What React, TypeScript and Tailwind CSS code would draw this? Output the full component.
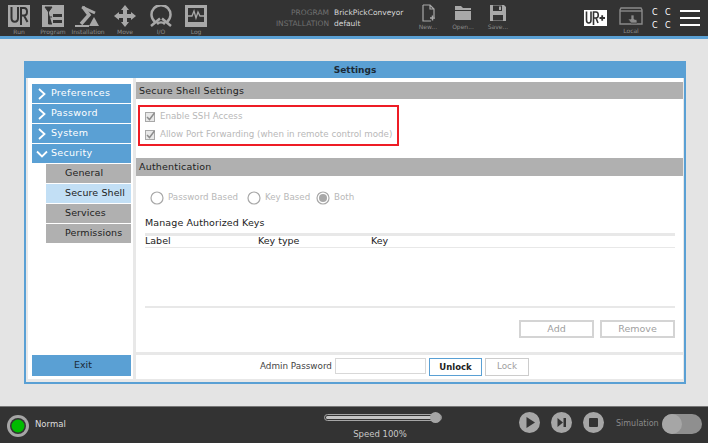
import React from "react";

const font = { fontFamily: '"DejaVu Sans", sans-serif' };

function NavIcon({ label, w, children, className }: { label: string; w: string; children: React.ReactNode; className?: string }) {
    return <div className={`flex flex-col items-center shrink-0 ${w} ${className || ""}`}>
        <div className="h-[23px] flex items-center justify-center">{children}</div>
        <span className="text-[6px] leading-[7px] mt-[1px] text-[#8a8a8a] whitespace-nowrap">{label}</span>
    </div>;
}

function UrMark({ color, bg }: { color: string; bg: string }) {
    return <>
        <path d="M0 0H22V22H0Z" fill={color} />
        <path d="M3.5 2V13C3.5 18 10 18 10 13V2M13 20V3H16C20 3 20 10.5 16 10.5H13M16 10.5L19.5 17" fill="none" stroke={bg} strokeWidth="2" />
    </>;
}

function SideItem({ label, open }: { label: string; open?: boolean }) {
    return <div className="h-[19px] mb-[1px] bg-[#5aa0d4] flex items-center text-white text-[9.5px]">
        <svg width="12" height="12" viewBox="0 0 12 12" className="ml-[4px] mr-[3px] shrink-0">
            <path d={open ? "M1 3.5L6 8.5L11 3.5" : "M3 1L8.5 6L3 11"} fill="none" stroke="white" strokeWidth="1.8" />
        </svg>
        <span className="tracking-[0.3px]">{label}</span>
    </div>;
}

function SubItem({ label, active }: { label: string; active?: boolean }) {
    return <div className={`h-[19px] mb-[1px] ml-[14px] pl-[19px] flex items-center text-[9.5px] text-[#222] ${active ? "bg-[#c2dff5]" : "bg-[#b0b0b0]"}`}>
        <span className="tracking-[0.1px]">{label}</span>
    </div>;
}

function Check({ label }: { label: string }) {
    return <div className="h-[18px] flex items-center text-[8.7px] text-[#b8b8b8] whitespace-nowrap">
        <svg width="10" height="10" viewBox="0 0 10 10" className="mr-[5px] shrink-0">
            <rect x="0.5" y="0.5" width="9" height="9" fill="#e8e8e8" stroke="#a8a8a8" />
            <path d="M2 5L4.5 7.5L9.5 1" fill="none" stroke="#8c8c8c" strokeWidth="1.5" />
        </svg>
        {label}
    </div>;
}

function Radio({ label, on, w }: { label: string; on?: boolean; w: string }) {
    return <div className={`flex items-center text-[8.7px] text-[#b8b8b8] whitespace-nowrap ${w}`}>
        <svg width="14" height="14" viewBox="0 0 14 14" className="mr-[4px] shrink-0">
            <circle cx="7" cy="7" r="6" fill="white" stroke="#a8a8a8" strokeWidth="1.2" />
            {on && <circle cx="7" cy="7" r="4" fill="#a8a8a8" />}
        </svg>
        {label}
    </div>;
}

function Round({ children }: { children: React.ReactNode }) {
    return <svg width="21" height="21" viewBox="0 0 21 21" className="shrink-0">
        <circle cx="10.5" cy="10.5" r="10.5" fill="#a6a6a6" />
        {children}
    </svg>;
}

export default function App() {
    return <div className="w-[708px] h-[443px] flex flex-col bg-[#e4e4e4] overflow-hidden" style={font}>
        <div className="h-[36px] bg-[#333333] flex shrink-0 text-[#a8a8a8]">
            <div className="flex pt-[4px] pl-[8px]">
                <NavIcon label="Run" w="w-[22px]">
                    <svg width="22" height="22" viewBox="0 0 22 22"><UrMark color="#a8a8a8" bg="#333333" /></svg>
                </NavIcon>
                <NavIcon label="Program" w="w-[24px]" className="ml-[11px]">
                    <svg width="22" height="22" viewBox="0 0 22 22">
                        <path d="M0 0H22V22H0Z" fill="#a8a8a8" />
                        <path d="M3 2H10L6.5 7ZM6.5 7V19H10M6.5 12H10" fill="#333333" stroke="#333333" strokeWidth="1" />
                        <path d="M11 9H20V12H11ZM11 15H20V18H11Z" fill="#333333" />
                    </svg>
                </NavIcon>
                <NavIcon label="Installation" w="w-[28px]" className="ml-[9px]">
                    <svg width="26" height="22" viewBox="0 0 26 22">
                        <path d="M7 2L20 8" fill="none" stroke="#a8a8a8" strokeWidth="3" />
                        <path d="M8 2L14 10L6 19" fill="none" stroke="#a8a8a8" strokeWidth="3.5" />
                        <path d="M14 21L19 12L24 21Z" fill="#a8a8a8" />
                        <path d="M0 21H14" stroke="#a8a8a8" strokeWidth="2" />
                    </svg>
                </NavIcon>
                <NavIcon label="Move" w="w-[22px]" className="ml-[12px]">
                    <svg width="22" height="22" viewBox="0 0 22 22">
                        <path d="M11 0L15 5H13V9H17V7L22 11L17 15V13H13V17H15L11 22L7 17H9V13H5V15L0 11L5 7V9H9V5H7Z" fill="#a8a8a8" />
                    </svg>
                </NavIcon>
                <NavIcon label="I/O" w="w-[24px]" className="ml-[13px]">
                    <svg width="24" height="22" viewBox="0 0 24 22" fill="none" stroke="#a8a8a8" strokeWidth="2.5">
                        <path d="M6 17A9.5 9.5 0 1 1 18 17" />
                        <path d="M2 21L11 13.5M22 21L13 13.5M8 19A6 6 0 0 1 16 19" />
                    </svg>
                </NavIcon>
                <NavIcon label="Log" w="w-[22px]" className="ml-[12px]">
                    <svg width="22" height="22" viewBox="0 0 22 22">
                        <path d="M0 0H22V22H0Z" fill="#a8a8a8" />
                        <path d="M3 3H19V17H3Z" fill="#333333" />
                        <path d="M3 11H7L9 6L11 13L13 7L15 11H19" fill="none" stroke="#a8a8a8" strokeWidth="1.3" />
                    </svg>
                </NavIcon>
            </div>
            <div className="flex flex-col ml-[58px] pt-[7px] text-[7.5px] leading-[11px] w-[151px] shrink-0">
                <div className="flex"><span className="w-[64px] text-right text-[#707070]">PROGRAM</span><span className="ml-[5px] text-[#d8d8d8]">BrickPickConveyor</span></div>
                <div className="flex"><span className="w-[64px] text-right text-[#707070] whitespace-nowrap">INSTALLATION</span><span className="ml-[5px] text-[#d8d8d8]">default</span></div>
            </div>
            <div className="flex pt-[4px]">
                <div className="flex flex-col items-center w-[24px]">
                    <svg width="13" height="18" viewBox="0 0 13 18" fill="none" stroke="#a8a8a8" strokeWidth="1.2">
                        <path d="M1 1H8L12 5V13M8 1V5H12M9 17H1V1" />
                        <path d="M8 14H13M10.5 11.5V16.5" strokeWidth="1.5" />
                    </svg>
                    <span className="text-[6px] leading-[7px] mt-[1px] text-[#8a8a8a]">New...</span>
                </div>
                <div className="flex flex-col items-center w-[24px] ml-[11px]">
                    <svg width="18" height="18" viewBox="0 0 18 18"><path d="M1 2H7L9 4H17V6H1ZM1 7H17V16H1Z" fill="#a8a8a8" /></svg>
                    <span className="text-[6px] leading-[7px] mt-[1px] text-[#8a8a8a]">Open...</span>
                </div>
                <div className="flex flex-col items-center w-[24px] ml-[11px]">
                    <svg width="18" height="18" viewBox="0 0 18 18">
                        <path d="M1 1H15L17 3V17H1Z" fill="#a8a8a8" />
                        <path d="M4 1.5H13V7H4ZM4 11H14V16.5H4Z" fill="#333333" />
                        <path d="M10 2.5H12V6H10Z" fill="#a8a8a8" />
                    </svg>
                    <span className="text-[6px] leading-[7px] mt-[1px] text-[#8a8a8a]">Save...</span>
                </div>
            </div>
            <div className="ml-[74px] pt-[10px] shrink-0">
                <svg width="23" height="16" viewBox="0 0 23 16">
                    <path d="M0 0H23V16H0Z" fill="white" />
                    <path d="M2.5 1.5V10C2.5 14 7 14 7 10V1.5M9.5 15V2H12C15 2 15 8 12 8H9.5M12 8L14 13" fill="none" stroke="#333333" strokeWidth="1.6" />
                    <path d="M15.5 8H21M18.2 5.2V10.8" stroke="#333333" strokeWidth="1.8" />
                </svg>
            </div>
            <div className="flex flex-col items-center ml-[12px] pt-[7px] w-[24px]">
                <svg width="24" height="19" viewBox="0 0 24 19" fill="none" stroke="#8a8a8a" strokeWidth="1.4">
                    <path d="M2 1H22L23 3V17H1V3Z" />
                    <path d="M1 4H23" />
                    <path d="M12 8H15V12L18 13V16H12L9 12L12 12Z" fill="#8a8a8a" stroke="#333333" strokeWidth="0.7" />
                </svg>
                <span className="text-[6px] leading-[7px] mt-[1px] text-[#8a8a8a]">Local</span>
            </div>
            <div className="grid grid-cols-[13px_13px] auto-rows-[13px] ml-[9px] pt-[6px] h-[32px] text-[8px] leading-[13px] text-white">
                <span>C</span><span>C</span><span>C</span><span>C</span>
            </div>
            <div className="flex flex-col gap-[5px] ml-[2px] pt-[10px]">
                <div className="w-[20px] h-[2px] bg-white" />
                <div className="w-[20px] h-[2px] bg-white" />
                <div className="w-[20px] h-[2px] bg-white" />
            </div>
        </div>
        <div className="h-[3px] bg-[#5aa0d4] shrink-0" />

        <div className="h-[367px] shrink-0 pt-[22px] pl-[24px]">
            <div className="w-[662px] h-[323px] border-2 border-[#5aa0d4] bg-[#e8e8e8] flex flex-col">
                <div className="h-[15px] bg-[#5aa0d4] shrink-0 flex items-center justify-center text-[9px] font-bold text-[#1c2a36]">Settings</div>
                <div className="flex-1 flex pl-[2px] pr-[1px] pb-[3px] gap-[3px] min-h-0">
                    <div className="w-[105px] bg-white pl-[4px] pr-[2px] pt-[6px] pb-[3px] flex flex-col">
                        <SideItem label="Preferences" />
                        <SideItem label="Password" />
                        <SideItem label="System" />
                        <SideItem label="Security" open />
                        <SubItem label="General" />
                        <SubItem label="Secure Shell" active />
                        <SubItem label="Services" />
                        <SubItem label="Permissions" />
                        <div className="mt-auto h-[21px] pl-[3px] bg-[#5aa0d4] flex items-center justify-center text-[9.5px] text-[#1c2a36]">Exit</div>
                    </div>
                    <div className="flex-1 flex flex-col gap-[3px] min-w-0">
                        <div className="flex-1 bg-white pt-[4px] flex flex-col">
                            <div className="h-[17px] pt-[1px] bg-[#b0b0b0] flex items-center pl-[3px] text-[9.5px] text-[#222] tracking-[0.2px]">Secure Shell Settings</div>
                            <div className="w-[261px] h-[41px] ml-[2px] mt-[6px] border-2 border-[#ee1c25] pl-[5px] pt-[1px]">
                                <Check label="Enable SSH Access" />
                                <Check label="Allow Port Forwarding (when in remote control mode)" />
                            </div>
                            <div className="h-[18px] mt-[12px] bg-[#b0b0b0] flex items-center pl-[3px] text-[9.5px] text-[#222] tracking-[0.2px]">Authentication</div>
                            <div className="flex items-center h-[14px] mt-[15px] pl-[14px]">
                                <Radio label="Password Based" w="w-[97px]" />
                                <Radio label="Key Based" w="w-[69px]" />
                                <Radio label="Both" on w="w-[50px]" />
                            </div>
                            <div className="ml-[9px] mr-[8px] mt-[12px] text-[9.5px] leading-[12px] text-[#222] tracking-[0.1px]">Manage Authorized Keys</div>
                            <div className="ml-[9px] mr-[8px] mt-[4px] h-[75px] border-t-[3px] border-b-2 border-[#e8e8e8] flex flex-col">
                                <div className="h-[10px] flex text-[9.5px] leading-[10px] text-[#222] border-b border-[#e8e8e8] box-content pb-[1px]">
                                    <span className="w-[113px]">Label</span>
                                    <span className="w-[113px]">Key type</span>
                                    <span>Key</span>
                                </div>
                            </div>
                            <div className="flex justify-end gap-[6px] mr-[8px] mt-[12px] text-[9.5px] text-[#a0a0a0]">
                                <div className="w-[75px] h-[18px] border-2 border-[#d4d4d4] flex items-center justify-center">Add</div>
                                <div className="w-[75px] h-[18px] border-2 border-[#d4d4d4] flex items-center justify-center">Remove</div>
                            </div>
                        </div>
                        <div className="h-[24px] bg-white shrink-0 flex items-start pt-[3px] pl-[124px] text-[8.8px]">
                            <span className="text-[#444] mt-[2px] w-[72px] whitespace-nowrap">Admin Password</span>
                            <div className="w-[91px] h-[16px] ml-[3px] border border-[#d8d8d8] bg-white" />
                            <div className="w-[53px] h-[18px] ml-[3px] border border-[#5aa0d4] flex items-center justify-center text-[8.5px] font-bold text-[#222]">Unlock</div>
                            <div className="w-[44px] h-[18px] ml-[3px] border border-[#cccccc] flex items-center justify-center text-[#a0a0a0]">Lock</div>
                        </div>
                    </div>
                </div>
            </div>
        </div>

        <div className="flex-1 bg-[#333333] border-t border-[#777777] flex items-start">
            <svg width="22" height="22" viewBox="0 0 22 22" className="ml-[7px] mt-[8px] shrink-0">
                <circle cx="11" cy="11" r="11" fill="#a6a6a6" />
                <circle cx="11" cy="11" r="8" fill="#333333" />
                <circle cx="11" cy="11" r="6.5" fill="#00bb00" />
            </svg>
            <span className="ml-[6px] mt-[12px] text-[8.5px] leading-[10px] text-[#dddddd] w-[50px] shrink-0">Normal</span>
            <div className="ml-[239px] w-[118px] flex flex-col shrink-0">
                <div className="relative w-[118px] h-[7px] mt-[7px] rounded-full bg-[#333333] border border-[#a6a6a6] flex items-center">
                    <div className="h-[3px] w-full mx-[1px] rounded-full bg-[#c4c4c4]" />
                    <div className="absolute right-0 -top-[3px] w-[11px] h-[11px] rounded-full bg-[#a6a6a6]" />
                </div>
                <span className="mt-[7px] pr-[6px] text-center text-[8.5px] leading-[12px] text-[#c8c8c8]">Speed 100%</span>
            </div>
            <div className="flex gap-[11px] ml-[77px] mt-[5px]">
                <Round><path d="M7.5 5L16 10.5L7.5 16Z" fill="#333333" /></Round>
                <Round><path d="M6.5 6L12 10.5L6.5 15ZM12.5 6H15V15H12.5Z" fill="#333333" /></Round>
                <Round><rect x="6" y="6" width="9" height="9" rx="1" fill="#333333" /></Round>
            </div>
            <span className="ml-[12px] mt-[11px] text-[8px] leading-[12px] text-[#8a8a8a] w-[46px] shrink-0">Simulation</span>
            <div className="w-[40px] h-[20px] mt-[7px] rounded-full bg-[#8f8f8f] relative shrink-0">
                <div className="absolute left-0 top-0 w-[20px] h-[20px] rounded-full bg-[#a6a6a6]" />
            </div>
        </div>
    </div>;
}
